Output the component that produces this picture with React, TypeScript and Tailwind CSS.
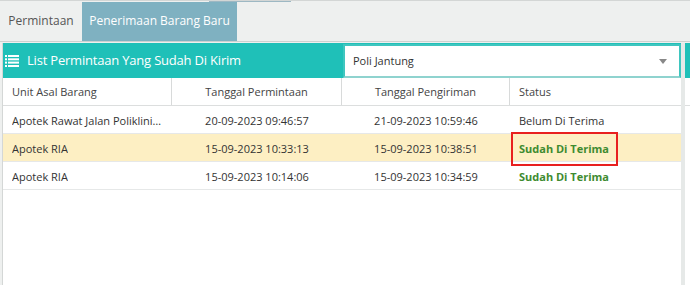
import React from "react";

// baris data tabel
interface IRow {
  unit: string;
  tglMinta: string;
  tglKirim: string;
  status: string;
  done: boolean;
  active?: boolean;
}

const rows: IRow[] = [
  {
    unit: "Apotek Rawat Jalan Poliklinik Jantung",
    tglMinta: "20-09-2023 09:46:57",
    tglKirim: "21-09-2023 10:59:46",
    status: "Belum Di Terima",
    done: false,
  },
  {
    unit: "Apotek RIA",
    tglMinta: "15-09-2023 10:33:13",
    tglKirim: "15-09-2023 10:38:51",
    status: "Sudah Di Terima",
    done: true,
    active: true,
  },
  {
    unit: "Apotek RIA",
    tglMinta: "15-09-2023 10:14:06",
    tglKirim: "15-09-2023 10:34:59",
    status: "Sudah Di Terima",
    done: true,
  },
];

function ListIcon() {
  return (
    <svg width="14" height="12" viewBox="0 0 14 12" fill="white">
      <rect x="0" y="0" width="2" height="2" />
      <rect x="3" y="0" width="11" height="2" />
      <rect x="0" y="3.3" width="2" height="2" />
      <rect x="3" y="3.3" width="11" height="2" />
      <rect x="0" y="6.6" width="2" height="2" />
      <rect x="3" y="6.6" width="11" height="2" />
      <rect x="0" y="10" width="2" height="2" />
      <rect x="3" y="10" width="11" height="2" />
    </svg>
  );
}

export default function App() {
  return (
    <div
      className="relative h-[285px] w-[690px] overflow-hidden bg-[#eef0ef] text-[#333]"
      style={{ fontFamily: '"Open Sans", "Noto Sans", sans-serif' }}
    >
      {/* garis atas */}
      <div className="flex h-[2px] border-t border-[#d3d6d5]">
        <div className="ml-[209px] h-[1px] w-[82px] bg-[#9db8c3]" />
      </div>

      {/* tab */}
      <div className="flex h-[40px] border-b border-[#cdd1d0]">
        <div className="flex w-[82px] items-center justify-center pb-[1px] text-[12px] text-[#555]">
          Permintaan
        </div>
        <div className="flex w-[155px] items-center justify-center bg-[#7fb1c1] pb-[1px] text-[12px] text-white">
          Penerimaan Barang Baru
        </div>
      </div>

      <div className="mt-[1px] flex h-[242px]">
        {/* panel utama */}
        <div className="ml-[2px] flex w-[679px] flex-col border-l border-[#d4d7d6] bg-white">
          <div className="flex h-[35px] bg-[#1fc0b8] pt-[1px]">
            <div className="flex w-[340px] items-center gap-[8px] pl-[2px] text-[13px] tracking-[-0.2px] text-white">
              <ListIcon />
              <span>List Permintaan Yang Sudah Di Kirim</span>
            </div>
            <div className="flex flex-1 items-center justify-between border-2 border-[#3fc6bf] border-b-[#8fd3cf] bg-white pl-[8px] pr-[12px] text-[11px]">
              <span>Poli Jantung</span>
              <span className="h-0 w-0 border-x-[4px] border-t-[5px] border-x-transparent border-t-[#888]" />
            </div>
          </div>

          <div className="grid h-[28px] grid-cols-[169px_170px_168px_1fr] border-b border-[#dcdede] text-[11px] text-[#444]">
            <div className="flex items-center border-r border-[#d8dada] pl-[9px] pt-[2px]">Unit Asal Barang</div>
            <div className="flex items-center justify-center border-r border-[#d8dada] pt-[2px]">Tanggal Permintaan</div>
            <div className="flex items-center justify-center border-r border-[#d8dada] pt-[2px]">Tanggal Pengiriman</div>
            <div className="flex items-center pl-[9px] pt-[2px]">Status</div>
          </div>

          {rows.map((r, i) => (
            <div
              key={i}
              className={`grid h-[28px] grid-cols-[169px_170px_168px_1fr] border-b border-[#e6e8e8] text-[11px] ${
                r.active ? "bg-[#fdefc3]" : "bg-white"
              }`}
            >
              <div className="flex min-w-0 items-center pl-[9px] pr-[10px] pt-[3px]">
                <span className="truncate">{r.unit}</span>
              </div>
              <div className="flex items-center justify-center pt-[3px]">{r.tglMinta}</div>
              <div className="flex items-center justify-center pt-[3px]">{r.tglKirim}</div>
              <div className="relative flex items-center pl-[9px] pt-[3px]">
                <span className={r.done ? "font-bold text-[#3e8b30]" : ""}>{r.status}</span>
                {r.active && (
                  <div className="absolute left-[1px] top-[-2px] h-[34px] w-[107px] border-2 border-[#e8201f]" />
                )}
              </div>
            </div>
          ))}
        </div>

        {/* scrollbar */}
        <div className="w-[4px] bg-[#e6e9e8]" />

        {/* panel kanan */}
        <div className="flex flex-1 flex-col bg-white">
          <div className="h-[35px] bg-[#1fc0b8]" />
          <div className="h-[28px] border-b border-[#dcdede]" />
        </div>
      </div>
    </div>
  );
}
